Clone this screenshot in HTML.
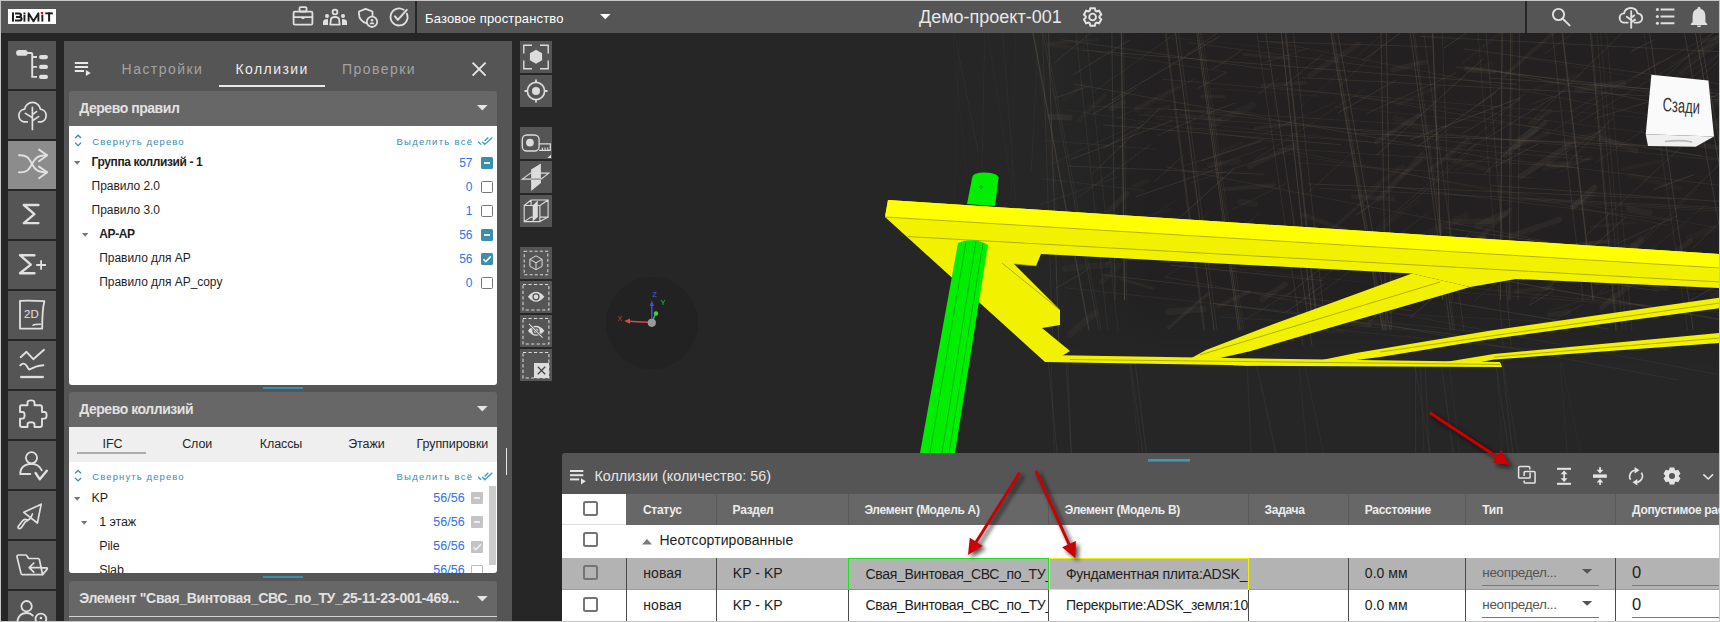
<!DOCTYPE html>
<html><head><meta charset="utf-8">
<style>
*{box-sizing:border-box;margin:0;padding:0}
html,body{width:1720px;height:622px;overflow:hidden}
body{position:relative;background:#c6c6c6;font-family:"Liberation Sans",sans-serif;color:#222}
.a{position:absolute}
.t{position:absolute;white-space:nowrap;line-height:1}
svg{position:absolute;overflow:visible}
.ic{fill:none;stroke:#e0e0e0;stroke-width:2;stroke-linecap:round;stroke-linejoin:round}
.sb{position:absolute;left:8px;width:48px;height:48px;background:#555}
</style></head><body>

<!-- main dark area -->
<div class="a" style="left:1px;top:33px;width:1718px;height:588px;background:#262626"></div>

<!-- TOP BAR -->
<div class="a" style="left:1px;top:1px;width:1718px;height:32px;background:#555"></div>
<div class="a" style="left:415px;top:1px;width:2px;height:32px;background:#262626"></div>
<div class="a" style="left:1525px;top:1px;width:2px;height:32px;background:#262626"></div>

<!-- logo -->
<div class="a" style="left:8px;top:9px;width:48px;height:15px;background:#fff"></div>
<svg style="left:8px;top:9px" width="48" height="15">
 <g fill="#1e1e1e">
  <rect x="4" y="3.4" width="2" height="9.2"/>
  <rect x="15.5" y="3.5" width="1.9" height="1.6"/>
  <rect x="15.5" y="5.6" width="1.9" height="7"/>
  <rect x="33.4" y="5.6" width="1.9" height="7"/>
  <rect x="37.3" y="3.4" width="7.6" height="1.9"/>
  <rect x="40.1" y="3.4" width="2" height="9.2"/>
 </g>
 <rect x="32.8" y="3" width="2.3" height="2" fill="#f00"/>
 <path d="M7,4.4 H11.2 Q13,4.4 13,6.1 Q13,7.9 11.2,7.9 H8 M11.2,7.9 Q13.6,7.9 13.6,9.8 Q13.6,11.6 11.4,11.6 H7" fill="none" stroke="#1e1e1e" stroke-width="2"/>
 <path d="M20.6,12.6 V4.2 L25.5,12.2 L30.4,4.2 V12.6" fill="none" stroke="#1e1e1e" stroke-width="1.9" stroke-linejoin="round"/>
</svg>

<!-- top icons -->
<svg style="left:0;top:0" width="1720" height="33">
 <g class="ic" style="stroke-width:1.8">
  <!-- briefcase -->
  <rect x="299.5" y="7.2" width="7" height="4.3" rx="1"/>
  <rect x="293.6" y="11.6" width="18.8" height="13" rx="1.2"/>
  <path d="M293.6,17.2 H312.4"/>
  <rect x="301.6" y="17" width="2.8" height="2" fill="#e0e0e0" stroke="none"/>
  <!-- people -->
  <circle cx="335" cy="12" r="2.4"/>
  <path d="M330.3,24.6 L331,19 Q331.6,17 335,17 Q338.4,17 339,19 L339.7,24.6 Z"/>
  <!-- shield -->
  <path d="M367,23.5 Q359,21 359,14 V11.5 L365.6,8.8 L372.5,11.5 V16"/>
  <circle cx="372" cy="21.8" r="5.2"/>
  <!-- check circle -->
  <path d="M403.6,9.8 A8.5,8.5 0 1 0 406.9,13.7"/>
  <path d="M395,16.4 L397.8,19.9 L406.8,9.9" style="stroke-width:2"/>
 </g>
 <g fill="#e0e0e0">
  <circle cx="327" cy="16" r="2"/>
  <circle cx="343" cy="16" r="2"/>
  <path d="M323,25 V22 Q323,19 328,19 V25 Z"/>
  <path d="M347,25 V22 Q347,19 342,19 V25 Z"/>
  <circle cx="372" cy="20.2" r="1.3"/>
  <path d="M369.6,24.3 Q369.6,22.3 372,22.3 Q374.4,22.3 374.4,24.3 Z"/>
 </g>
</svg>

<div class="t" style="left:425px;top:12px;font-size:13px;color:#fff;letter-spacing:0.15px">Базовое пространство</div>
<svg style="left:600px;top:14px" width="11" height="6"><path d="M0,0 H10.5 L5.25,5.2 Z" fill="#fff"/></svg>

<div class="t" style="left:919px;top:8px;font-size:18px;color:#e8e8e8">Демо-проект-001</div>

<!-- gear top -->
<svg style="left:0;top:0" width="1720" height="33">
 <path d="M1095.51,10.74 L1094.78,8.27 L1090.42,8.27 L1089.69,10.74 L1088.63,11.35 L1086.13,10.75 L1083.95,14.52 L1085.73,16.39 L1085.73,17.61 L1083.95,19.48 L1086.13,23.25 L1088.63,22.65 L1089.69,23.26 L1090.42,25.73 L1094.78,25.73 L1095.51,23.26 L1096.57,22.65 L1099.07,23.25 L1101.25,19.48 L1099.47,17.61 L1099.47,16.39 L1101.25,14.52 L1099.07,10.75 L1096.57,11.35 Z" fill="none" stroke="#e4e4e4" stroke-width="2" stroke-linejoin="miter"/>
 <circle cx="1092.6" cy="17" r="3.4" fill="none" stroke="#e4e4e4" stroke-width="1.9"/>
</svg>
<!-- top right icons -->
<svg style="left:0;top:0" width="1720" height="33">
 <g class="ic" style="stroke-width:1.9">
  <circle cx="1558.5" cy="14.5" r="5.6"/>
  <path d="M1562.5,18.5 L1569.6,25.4"/>
  <!-- cloud tree -->
  <path d="M1627.8,22.6 H1624.5 A4.6,4.6 0 0 1 1624,13.4 A7,7 0 0 1 1637.6,13.4 A4.6,4.6 0 0 1 1637.6,22.6 H1634.5"/>
  <path d="M1631.2,11.2 V27.8 M1631.2,20 L1626.8,16.8 M1631.2,17.8 L1634.2,15.4 M1631.2,22.2 L1635,19.6"/>
  <!-- list -->
  <path d="M1660.6,9.5 H1674.4 M1660.6,16.5 H1674.4 M1660.6,23.2 H1674.4" style="stroke-width:2;stroke-linecap:butt"/>
 </g>
 <g fill="#e0e0e0">
  <circle cx="1657.4" cy="9.5" r="1.5"/><circle cx="1657.4" cy="16.5" r="1.5"/><circle cx="1657.4" cy="23.2" r="1.5"/>
  <path d="M1699,6.8 Q1700.5,6.8 1700.6,8.8 Q1705.4,10.2 1705.4,16 V22 L1707.2,24 V25 H1690.8 V24 L1692.6,22 V16 Q1692.6,10.2 1697.4,8.8 Q1697.5,6.8 1699,6.8 Z"/>
  <path d="M1696.8,25.6 H1701.2 Q1701,27.3 1699,27.3 Q1697,27.3 1696.8,25.6 Z"/>
 </g>
</svg>

<!-- SIDEBAR -->
<div class="sb" style="top:41px"></div>
<div class="sb" style="top:91px"></div>
<div class="sb" style="top:141px;background:#8c8c8c"></div>
<div class="sb" style="top:191px"></div>
<div class="sb" style="top:241px"></div>
<div class="sb" style="top:291px"></div>
<div class="sb" style="top:341px"></div>
<div class="sb" style="top:391px"></div>
<div class="sb" style="top:441px"></div>
<div class="sb" style="top:491px"></div>
<div class="sb" style="top:541px"></div>
<div class="sb" style="top:591px;height:30px"></div>

<svg style="left:8px;top:41px" width="48" height="48">
 <g fill="#e0e0e0">
  <rect x="8.1" y="9.1" width="11.6" height="5.6" rx="2.8"/>
  <rect x="31" y="14" width="9" height="4.2" rx="2.1"/>
  <rect x="31" y="23.8" width="9" height="4.2" rx="2.1"/>
  <rect x="31" y="33.8" width="9" height="4.2" rx="2.1"/>
 </g>
 <path class="ic" style="stroke-width:1.9;stroke-linecap:butt;stroke-linejoin:miter" d="M18,12 H23.2 Q24.2,12 24.2,13 V35.9 H29 M24.2,16 H29 M24.2,25.9 H29"/>
</svg>
<svg style="left:8px;top:91px" width="48" height="48">
 <path class="ic" style="stroke-width:1.7" d="M19.3,30.8 H15.8 A6.4,6.4 0 0 1 16.6,18.2 A8.0,8.0 0 0 1 32.4,18.2 A6.4,6.4 0 0 1 33.2,30.8 H30.4"/>
 <path class="ic" style="stroke-width:1.7" d="M24.4,16.3 V38.4 M24.4,26.8 L17.4,22.4 M24.4,23.6 L28.5,20.6 M24.4,29.8 L30.6,25.6"/>
</svg>
<svg style="left:8px;top:141px" width="48" height="48">
 <g class="ic" style="stroke-width:1.9">
  <path d="M11,14.3 C19,13.8 21,17 24,23 C27,29 30,31.3 38.8,31.3"/>
  <path d="M11,31.3 C19,31.8 21,28.6 24,23 C27,17 30,14.3 38.8,14.3"/>
  <path d="M31,8.6 L39.2,14.3 L31,20.2 M31,25.6 L39.2,31.3 L31,37.2"/>
 </g>
</svg>
<svg style="left:8px;top:191px" width="48" height="48">
 <path class="ic" style="stroke-width:2.4" d="M30.4,14 H15.8 L26.4,23.1 L15.8,32.1 H30.4"/>
</svg>
<svg style="left:8px;top:241px" width="48" height="48">
 <path class="ic" style="stroke-width:2.4" d="M26.4,14.2 H12 L22.8,23.6 L12,32.3 H26.4"/>
 <path class="ic" style="stroke-width:1.8;stroke-linecap:butt" d="M28.2,24 H38 M33.1,19.2 V28.8"/>
</svg>
<svg style="left:8px;top:291px" width="48" height="48">
 <path class="ic" style="stroke-width:1.8" d="M12,9.8 Q24,9.4 36.4,10.2 Q34.2,18 34.2,37.6 H12 Z"/>
 <path class="ic" style="stroke-width:1.5" d="M25,34.3 Q25.6,33.3 32.5,33.3"/>
 <text x="16" y="26.8" font-family="Liberation Sans" font-size="11.5" fill="#e0e0e0">2D</text>
</svg>
<svg style="left:8px;top:341px" width="48" height="48">
 <g class="ic" style="stroke-width:1.9">
  <path d="M12.7,16.2 L18.5,10.8 L25.3,18.2 L36,8.8"/>
  <path d="M12.2,24.4 Q15.5,21 18,24 L21,28.6 L28,25.6 Q31.5,24.4 35.4,24.2"/>
  <path d="M12.2,36 H35.8" style="stroke-width:2.3;stroke-linecap:butt"/>
 </g>
</svg>
<svg style="left:8px;top:391px" width="48" height="48">
 <path class="ic" style="stroke-width:1.9" d="M13.5,14.2 H19.5 V11.5 Q19.5,9.4 23,9.4 Q26.5,9.4 26.5,11.5 V14.2 H32 Q34,14.2 34,16.2 V21 H36.5 Q38.6,21 38.6,24.3 Q38.6,27.6 36.5,27.6 H34 V33.8 Q34,36 32,36 H26.5 V33.3 Q26.5,31.2 23,31.2 Q19.5,31.2 19.5,33.3 V36 H14 Q12,36 12,33.8 V27.6 H14.6 Q16.6,27.6 16.6,24.3 Q16.6,21 14.6,21 H12 V16.2 Q12,14.2 13.5,14.2 Z"/>
</svg>
<svg style="left:8px;top:441px" width="48" height="48">
 <g class="ic" style="stroke-width:1.8">
  <circle cx="23.5" cy="16.8" r="5.6"/>
  <path d="M22.3,33 H12.2 Q12.4,23 23.5,22.8 Q30.8,23 33.8,29.3"/>
 </g>
 <path class="ic" style="stroke-width:2.4" d="M27.6,32 L31.8,38.3 L38.8,29.8"/>
</svg>
<svg style="left:8px;top:491px" width="48" height="48">
 <g class="ic" style="stroke-width:1.7">
  <path d="M33.2,13.2 L15.8,21.3 L29.4,32 Z"/>
  <path d="M24.4,23 L22.5,27.4 Q20,29.5 18,28.5 Q16,28 14,30.5 L10.2,35.6 Q9.6,37.6 11.6,37.6 Q12.6,37.6 13.6,36.2 L17.2,31 Q19.5,29.8 22.5,27.4"/>
 </g>
</svg>
<svg style="left:8px;top:541px" width="48" height="48">
 <g class="ic" style="stroke-width:1.7">
  <path d="M34.4,33.6 H14.4 Q13.4,33.6 13,32.4 L9,15.8 Q8.8,14 10.6,14 H17.5 Q18.4,14 19,15 L20.6,17.5 H30 Q31,17.5 31.4,18.6 L34.5,33.3"/>
  <path d="M33.6,26.8 H38.5 Q39.8,27 39,28.4 L34.6,33.6"/>
  <path d="M21.2,26.6 H33.6 M25.8,22 L21.2,26.6 L25.8,31.2"/>
 </g>
</svg>
<svg style="left:8px;top:591px" width="48" height="31">
 <g class="ic" style="stroke-width:1.8">
  <circle cx="18.6" cy="15.2" r="5.2"/>
  <path d="M9.4,30 Q11,22 18.6,22 Q22.5,22 24.8,24.6"/>
  <circle cx="32.9" cy="28" r="5.4"/>
 </g>
 <circle cx="32.9" cy="27" r="1.3" fill="#e0e0e0"/>
</svg>


<!-- PANEL -->
<div class="a" style="left:64px;top:41px;width:448px;height:580px;background:#555"></div>

<!--PANEL_START--><svg style="left:0;top:0" width="520" height="100"><g fill="#e8e8e8"><rect x="74.8" y="62" width="13.3" height="2"/><rect x="74.8" y="66" width="13.3" height="2"/><rect x="74.8" y="70" width="9.2" height="2"/><path d="M85.9,70 L90.7,73 L85.9,76.1 Z"/></g><path d="M472.6,62.6 L485.6,75.6 M485.6,62.6 L472.6,75.6" stroke="#e6e6e6" stroke-width="1.9" fill="none"/></svg>
<div class="t" style="left:121.6px;top:62.45px;font-size:14px;color:#a3a3a3;letter-spacing:1.45px;">Настройки</div>
<div class="t" style="left:235.4px;top:62.45px;font-size:14px;color:#ececec;letter-spacing:1.45px;">Коллизии</div>
<div class="t" style="left:342px;top:62.45px;font-size:14px;color:#a3a3a3;letter-spacing:1.45px;">Проверки</div>
<div class="a" style="left:219px;top:85px;width:106px;height:2px;background:#e8e8e8"></div>
<div class="a" style="left:69px;top:91px;width:428px;height:35px;background:#676767;border-radius:3px 3px 0 0"></div>
<div class="t" style="left:79.2px;top:101.35px;font-size:14px;color:#e2e2e2;font-weight:700;letter-spacing:-0.45px;">Дерево правил</div>
<svg style="left:476.6px;top:104.7px" width="11" height="6"><path d="M0,0 H10.6 L5.3,5.6 Z" fill="#e4e4e4"/></svg>
<div class="a" style="left:69px;top:126px;width:428px;height:259px;background:#fff;border-radius:0 0 3px 3px"></div>
<svg style="left:0;top:0" width="520" height="622"><path d="M75.2,138 L78.1,135.2 L81,138 M75.2,142.7 L78.1,145.6 L81,142.7" stroke="#3a8db0" stroke-width="1.3" fill="none"/><path d="M478.2,141.7 L481,144.6 M482.2,141.7 L484.8,144.4 L492.3,137.5 M484.6,141.1 L488.3,137.5" stroke="#3a9bc6" stroke-width="1.35" fill="none"/></svg>
<div class="t" style="left:92.3px;top:136.96px;font-size:9.5px;color:#3a8db0;letter-spacing:1.1px;">Свернуть дерево</div>
<div class="t" style="left:396.4px;top:136.96px;font-size:9.5px;color:#3a8db0;letter-spacing:1.3px;">Выделить всё</div>
<svg style="left:74px;top:161px" width="7" height="5"><path d="M0,0 H6.4 L3.2,3.8 Z" fill="#757575"/></svg>
<div class="t" style="left:91.6px;top:155.84px;font-size:12px;color:#1f1f1f;font-weight:700;letter-spacing:-0.4px;">Группа коллизий - 1</div>
<div class="t" style="right:1247.5px;top:156.84px;font-size:12px;color:#2f72f0">57</div>
<div class="a" style="left:481px;top:157px;width:12px;height:12px;background:#3a8fae;border-radius:1.5px"></div>
<div class="a" style="left:483.8px;top:162px;width:6.4px;height:2px;background:#e6e6e6"></div>
<div class="t" style="left:91.6px;top:179.84px;font-size:12px;color:#1f1f1f;letter-spacing:-0.05px;">Правило 2.0</div>
<div class="t" style="right:1247.5px;top:180.84px;font-size:12px;color:#2f72f0">0</div>
<div class="a" style="left:481px;top:181px;width:12px;height:12px;border:1.5px solid #777;border-radius:1.5px;background:#fff"></div>
<div class="t" style="left:91.6px;top:203.84px;font-size:12px;color:#1f1f1f;letter-spacing:-0.05px;">Правило 3.0</div>
<div class="t" style="right:1247.5px;top:204.84px;font-size:12px;color:#2f72f0">1</div>
<div class="a" style="left:481px;top:205px;width:12px;height:12px;border:1.5px solid #777;border-radius:1.5px;background:#fff"></div>
<svg style="left:81.8px;top:233px" width="7" height="5"><path d="M0,0 H6.4 L3.2,3.8 Z" fill="#757575"/></svg>
<div class="t" style="left:99.3px;top:227.84px;font-size:12px;color:#1f1f1f;font-weight:700;letter-spacing:-0.4px;">AP-AP</div>
<div class="t" style="right:1247.5px;top:228.84px;font-size:12px;color:#2f72f0">56</div>
<div class="a" style="left:481px;top:229px;width:12px;height:12px;background:#3a8fae;border-radius:1.5px"></div>
<div class="a" style="left:483.8px;top:234px;width:6.4px;height:2px;background:#e6e6e6"></div>
<div class="t" style="left:99.3px;top:251.84px;font-size:12px;color:#1f1f1f;letter-spacing:-0.05px;">Правило для AP</div>
<div class="t" style="right:1247.5px;top:252.84px;font-size:12px;color:#2f72f0">56</div>
<div class="a" style="left:481px;top:253px;width:12px;height:12px;background:#3a8fae;border-radius:1.5px"></div>
<svg style="left:481px;top:253px" width="12" height="12"><path d="M2.4,6.2 L4.8,8.6 L9.8,3.4" stroke="#fff" stroke-width="1.6" fill="none"/></svg>
<div class="t" style="left:99.3px;top:275.84px;font-size:12px;color:#1f1f1f;letter-spacing:-0.05px;">Правило для AP_copy</div>
<div class="t" style="right:1247.5px;top:276.84px;font-size:12px;color:#2f72f0">0</div>
<div class="a" style="left:481px;top:277px;width:12px;height:12px;border:1.5px solid #777;border-radius:1.5px;background:#fff"></div>
<div class="a" style="left:263px;top:387px;width:40px;height:2px;background:#3a8db0"></div>
<div class="a" style="left:69px;top:392px;width:428px;height:35px;background:#676767;border-radius:3px 3px 0 0"></div>
<div class="t" style="left:79.2px;top:402.15px;font-size:14px;color:#e2e2e2;font-weight:700;letter-spacing:-0.45px;">Дерево коллизий</div>
<svg style="left:476.6px;top:405.5px" width="11" height="6"><path d="M0,0 H10.6 L5.3,5.6 Z" fill="#e4e4e4"/></svg>
<div class="a" style="left:69px;top:427px;width:428px;height:35px;background:#efefef"></div>
<div class="t" style="left:102.6px;top:437.72px;font-size:12.5px;color:#262626;letter-spacing:-0.1px;">IFC</div>
<div class="t" style="left:182.2px;top:437.72px;font-size:12.5px;color:#262626;letter-spacing:-0.1px;">Слои</div>
<div class="t" style="left:259.8px;top:437.72px;font-size:12.5px;color:#262626;letter-spacing:-0.1px;">Классы</div>
<div class="t" style="left:348.2px;top:437.72px;font-size:12.5px;color:#262626;letter-spacing:-0.1px;">Этажи</div>
<div class="t" style="left:416.6px;top:437.72px;font-size:12.5px;color:#262626;letter-spacing:-0.1px;">Группировки</div>
<div class="a" style="left:77px;top:452px;width:69px;height:2px;background:#acacac"></div>
<div class="a" style="left:69px;top:462px;width:428px;height:111px;background:#fff;border-radius:0 0 3px 3px;overflow:hidden">
<div class="a" style="left:-69px;top:-462px;width:1720px;height:622px"><svg style="left:0;top:0" width="520" height="622"><path d="M75.2,473.3 L78.1,470.5 L81,473.3 M75.2,478.0 L78.1,480.90000000000003 L81,478.0" stroke="#3a8db0" stroke-width="1.3" fill="none"/><path d="M478.2,477.0 L481,479.90000000000003 M482.2,477.0 L484.8,479.7 L492.3,472.8 M484.6,476.40000000000003 L488.3,472.8" stroke="#3a9bc6" stroke-width="1.35" fill="none"/></svg>
<div class="t" style="left:92.3px;top:472.26px;font-size:9.5px;color:#3a8db0;letter-spacing:1.1px;">Свернуть дерево</div>
<div class="t" style="left:396.4px;top:472.26px;font-size:9.5px;color:#3a8db0;letter-spacing:1.3px;">Выделить всё</div>
<svg style="left:73.9px;top:497.2px" width="7" height="5"><path d="M0,0 H6.4 L3.2,3.8 Z" fill="#757575"/></svg>
<div class="t" style="left:91.4px;top:491.62px;font-size:12.5px;color:#1f1f1f;letter-spacing:-0.1px;">KP</div>
<div class="t" style="right:1255.4px;top:491.62px;font-size:12.5px;color:#2f72f0">56/56</div>
<div class="a" style="left:471px;top:492.2px;width:12px;height:12px;background:#c4c4c4;border-radius:1px"></div>
<div class="a" style="left:474px;top:497.2px;width:6px;height:2px;background:#ededed"></div>
<svg style="left:81px;top:521.4px" width="7" height="5"><path d="M0,0 H6.4 L3.2,3.8 Z" fill="#757575"/></svg>
<div class="t" style="left:99.2px;top:515.82px;font-size:12.5px;color:#1f1f1f;letter-spacing:-0.1px;">1 этаж</div>
<div class="t" style="right:1255.4px;top:515.82px;font-size:12.5px;color:#2f72f0">56/56</div>
<div class="a" style="left:471px;top:516.4px;width:12px;height:12px;background:#c4c4c4;border-radius:1px"></div>
<div class="a" style="left:474px;top:521.4px;width:6px;height:2px;background:#ededed"></div>
<div class="t" style="left:99.2px;top:540.22px;font-size:12.5px;color:#1f1f1f;letter-spacing:-0.1px;">Pile</div>
<div class="t" style="right:1255.4px;top:540.22px;font-size:12.5px;color:#2f72f0">56/56</div>
<div class="a" style="left:471px;top:540.8px;width:12px;height:12px;background:#c4c4c4;border-radius:1px"></div>
<svg style="left:471px;top:540.8px" width="12" height="12"><path d="M2.4,6.2 L4.8,8.6 L9.8,3.4" stroke="#f2f2f2" stroke-width="1.5" fill="none"/></svg>
<div class="t" style="left:99.2px;top:564.02px;font-size:12.5px;color:#1f1f1f;letter-spacing:-0.1px;">Slab</div>
<div class="t" style="right:1255.4px;top:564.02px;font-size:12.5px;color:#2f72f0">56/56</div>
<div class="a" style="left:471px;top:564.6px;width:12px;height:12px;border:1.3px solid #bbb;border-radius:1px;background:#fff"></div>
<div class="a" style="left:489px;top:486px;width:7px;height:79px;background:#cbcbcb"></div>
</div></div>
<div class="a" style="left:505.5px;top:448px;width:1.5px;height:27px;background:#e8e8e8"></div>
<div class="a" style="left:263px;top:576px;width:40px;height:2px;background:#3a8db0"></div>
<div class="a" style="left:69px;top:581px;width:428px;height:40px;background:#676767;border-radius:3px 3px 0 0"></div>
<div class="t" style="left:79.2px;top:590.95px;font-size:14px;color:#e2e2e2;font-weight:700;letter-spacing:-0.33px;">Элемент "Свая_Винтовая_СВС_по_ТУ_25-11-23-001-469...</div>
<svg style="left:476.6px;top:595.5px" width="11" height="6"><path d="M0,0 H10.6 L5.3,5.6 Z" fill="#e4e4e4"/></svg>
<div class="a" style="left:69px;top:616px;width:428px;height:1px;background:#d4d4d4"></div>
<!--PANEL_END-->

<!-- TOOL COLUMN -->


<!-- VIEWPORT -->
<!--VIEW_START--><div class="a" style="left:520px;top:41px;width:32px;height:32px;background:#555"></div>
<div class="a" style="left:520px;top:75px;width:32px;height:32px;background:#555"></div>
<div class="a" style="left:520px;top:127px;width:32px;height:32px;background:#555"></div>
<div class="a" style="left:520px;top:161px;width:32px;height:32px;background:#555"></div>
<div class="a" style="left:520px;top:195px;width:32px;height:32px;background:#555"></div>
<div class="a" style="left:520px;top:247px;width:32px;height:32px;background:#555"></div>
<div class="a" style="left:520px;top:281px;width:32px;height:32px;background:#555"></div>
<div class="a" style="left:520px;top:315px;width:32px;height:32px;background:#555"></div>
<div class="a" style="left:520px;top:349px;width:32px;height:32px;background:#555"></div>
<svg style="left:520px;top:41px" width="32" height="32">
 <path d="M3.8,12.4 V4.2 H12 M20,4.2 H28.2 V12.4 M28.2,19.6 V27.8 H20 M12,27.8 H3.8 V19.6" fill="none" stroke="#dcdcdc" stroke-width="1.4"/>
 <path d="M16,8.7 L22.1,12.2 V19.2 L16,22.7 L9.9,19.2 V12.2 Z" fill="#dcdcdc"/>
</svg>
<svg style="left:520px;top:75px" width="32" height="32">
 <circle cx="16" cy="16" r="8.6" fill="none" stroke="#dcdcdc" stroke-width="1.7"/>
 <circle cx="16" cy="16" r="4" fill="#dcdcdc"/>
 <path d="M16,4.5 V7.5 M16,24.5 V27.5 M4.5,16 H7.5 M24.5,16 H27.5" stroke="#dcdcdc" stroke-width="1.8"/>
</svg>
<svg style="left:520px;top:127px" width="32" height="32">
 <rect x="2.3" y="8" width="16.8" height="16" rx="4.5" fill="none" stroke="#dcdcdc" stroke-width="1.3"/>
 <circle cx="9.9" cy="15.6" r="3.9" fill="#dcdcdc"/>
 <path d="M19.1,16.9 H30.3 V23.4 H19.1" fill="none" stroke="#dcdcdc" stroke-width="1.2"/>
 <path d="M22.4,20.6 V23 M25.1,20.6 V23 M27.8,20.6 V23" stroke="#dcdcdc" stroke-width="1.1"/>
 <path d="M31,27.4 V31 H27.4 Z" fill="#dcdcdc"/>
</svg>
<svg style="left:520px;top:161px" width="32" height="32">
 <path d="M20.9,2.5 V22 L11.1,30 V8.4 Z" fill="#dcdcdc"/>
 <path d="M2.3,18.1 L10.6,12.1 H28.8 L21,18.1 Z" fill="none" stroke="#dcdcdc" stroke-width="1.1"/>
 <clipPath id="spc"><path d="M20.9,2.5 V22 L11.1,30 V8.4 Z"/></clipPath>
 <path d="M2.3,18.1 H21" fill="none" stroke="#8a8a8a" stroke-width="1.1" clip-path="url(#spc)"/>
</svg>
<svg style="left:520px;top:195px" width="32" height="32">
 <path d="M4.2,10.5 H19.9 V26.6 H4.2 Z M11.1,5 H28.1 V22.1 H19.9 M11.1,5 V10.5 M4.2,10.5 L11.1,5 M19.9,10.5 L28.1,5 M19.9,26.6 L28.1,22.1 M4.2,26.6 L11.1,22.1 H12.7" fill="none" stroke="#dcdcdc" stroke-width="1.1"/>
 <path d="M12.7,10.5 L17.8,5.5 V22 L12.7,26.6 Z" fill="#dcdcdc"/>
</svg>
<svg style="left:520px;top:247px" width="32" height="32">
 <rect x="4.2" y="4.2" width="23.6" height="23.6" fill="none" stroke="#dcdcdc" stroke-width="1.05" stroke-dasharray="3,2.2"/>
 <path d="M16,8.8 L22.1,12.3 V19.3 L16,22.7 L9.9,19.3 V12.3 Z M9.9,12.3 L16,15.8 L22.1,12.3 M16,15.8 V22.7" fill="none" stroke="#dcdcdc" stroke-width="1"/>
</svg>
<svg style="left:520px;top:281px" width="32" height="32">
 <rect x="3" y="3.4" width="25.9" height="25.6" fill="none" stroke="#dcdcdc" stroke-width="1.05" stroke-dasharray="3.2,2.3"/>
 <path d="M7.9,15.8 Q16,5.8 24.4,15.8 Q16,25.8 7.9,15.8 Z" fill="#dcdcdc"/>
 <circle cx="16" cy="15.8" r="3" fill="none" stroke="#555" stroke-width="1.3"/>
</svg>
<svg style="left:520px;top:315px" width="32" height="32">
 <rect x="3" y="3.4" width="25.9" height="25.6" fill="none" stroke="#dcdcdc" stroke-width="1.05" stroke-dasharray="3.2,2.3"/>
 <path d="M7.9,15.8 Q16,5.8 24.4,15.8 Q16,25.8 7.9,15.8 Z" fill="#dcdcdc"/>
 <circle cx="16" cy="15.8" r="3" fill="none" stroke="#555" stroke-width="1.3"/>
 <path d="M9,8.8 L22.6,22.6" stroke="#555" stroke-width="2.6"/>
 <path d="M9,8.8 L22.6,22.6" stroke="#dcdcdc" stroke-width="1.1"/>
</svg>
<svg style="left:520px;top:349px" width="32" height="32">
 <rect x="3" y="3.4" width="25.9" height="25.6" fill="none" stroke="#dcdcdc" stroke-width="1.05" stroke-dasharray="3.2,2.3"/>
 <rect x="14" y="14" width="15" height="15" fill="#dcdcdc"/>
 <path d="M17.8,17.8 L25.2,25.2 M25.2,17.8 L17.8,25.2" stroke="#444" stroke-width="1.3"/>
</svg>
<svg style="left:512px;top:33px;overflow:hidden" width="1207" height="588" viewBox="512 33 1207 588"><defs><linearGradient id="wg" x1="0" y1="0" x2="1" y2="0"><stop offset="0" stop-color="#fff" stop-opacity="0"/><stop offset="0.15" stop-color="#fff"/><stop offset="1" stop-color="#fff"/></linearGradient><linearGradient id="wv" x1="0" y1="0" x2="0" y2="1"><stop offset="0" stop-color="#fff"/><stop offset="0.75" stop-color="#fff"/><stop offset="1" stop-color="#fff" stop-opacity="0"/></linearGradient><mask id="wm" maskUnits="userSpaceOnUse" x="1060" y="33" width="660" height="330"><rect x="1060" y="33" width="660" height="330" fill="url(#wg)"/></mask><mask id="wm2" maskUnits="userSpaceOnUse" x="1060" y="33" width="660" height="330"><rect x="1060" y="33" width="660" height="330" fill="url(#wv)"/></mask></defs><g mask="url(#wm2)"><rect x="1060" y="33" width="660" height="330" fill="#222020" mask="url(#wm)"/></g><g stroke="#716759" stroke-width="1" fill="none" stroke-linecap="round"><path d="M1045.0,33.0 L1101.0,330.0" stroke-opacity="0.15"/><path d="M1042.7,33.0 L1098.7,330.0" stroke-opacity="0.21"/><path d="M1033.2,33.0 L1089.2,330.0" stroke-opacity="0.24"/><path d="M1032.7,33.0 L1088.7,330.0" stroke-opacity="0.23"/><path d="M1048.5,33.0 L1058.8,345.0" stroke-opacity="0.31"/><path d="M1042.5,33.0 L1052.8,345.0" stroke-opacity="0.18"/><path d="M1076.0,33.0 L1107.8,330.0" stroke-opacity="0.18"/><path d="M1086.1,33.0 L1117.9,330.0" stroke-opacity="0.17"/><path d="M1121.4,33.0 L1124.6,300.0" stroke-opacity="0.25"/><path d="M1123.6,33.0 L1126.8,300.0" stroke-opacity="0.16"/><path d="M1121.4,33.0 L1124.6,300.0" stroke-opacity="0.18"/><path d="M1111.9,33.0 L1115.1,300.0" stroke-opacity="0.28"/><path d="M1121.3,33.0 L1124.4,300.0" stroke-opacity="0.26"/><path d="M1175.5,33.0 L1214.1,330.0" stroke-opacity="0.23"/><path d="M1178.5,33.0 L1217.0,330.0" stroke-opacity="0.21"/><path d="M1165.0,33.0 L1203.5,330.0" stroke-opacity="0.18"/><path d="M1175.6,33.0 L1214.1,330.0" stroke-opacity="0.16"/><path d="M1166.0,33.0 L1204.5,330.0" stroke-opacity="0.24"/><path d="M1202.2,33.0 L1243.9,330.0" stroke-opacity="0.15"/><path d="M1200.2,33.0 L1242.0,330.0" stroke-opacity="0.17"/><path d="M1196.8,33.0 L1238.6,330.0" stroke-opacity="0.33"/><path d="M1198.4,33.0 L1240.2,330.0" stroke-opacity="0.33"/><path d="M1265.8,33.0 L1312.0,345.0" stroke-opacity="0.30"/><path d="M1256.8,33.0 L1303.0,345.0" stroke-opacity="0.21"/><path d="M1281.4,33.0 L1313.3,330.0" stroke-opacity="0.16"/><path d="M1285.4,33.0 L1317.3,330.0" stroke-opacity="0.28"/><path d="M1281.3,33.0 L1313.3,330.0" stroke-opacity="0.29"/><path d="M1286.2,33.0 L1318.1,330.0" stroke-opacity="0.26"/><path d="M1293.6,33.0 L1325.6,330.0" stroke-opacity="0.23"/><path d="M1330.5,33.0 L1382.5,330.0" stroke-opacity="0.23"/><path d="M1333.4,33.0 L1385.4,330.0" stroke-opacity="0.16"/><path d="M1331.2,33.0 L1383.2,330.0" stroke-opacity="0.29"/><path d="M1332.6,33.0 L1384.6,330.0" stroke-opacity="0.19"/><path d="M1337.8,33.0 L1389.8,330.0" stroke-opacity="0.31"/><path d="M1381.0,33.0 L1385.9,330.0" stroke-opacity="0.32"/><path d="M1386.4,33.0 L1391.3,330.0" stroke-opacity="0.31"/><path d="M1423.7,33.0 L1463.9,330.0" stroke-opacity="0.22"/><path d="M1414.6,33.0 L1454.8,330.0" stroke-opacity="0.16"/><path d="M1413.0,33.0 L1453.2,330.0" stroke-opacity="0.27"/><path d="M1410.2,33.0 L1450.5,330.0" stroke-opacity="0.31"/><path d="M1432.9,33.0 L1443.0,300.0" stroke-opacity="0.25"/><path d="M1442.2,33.0 L1452.3,300.0" stroke-opacity="0.20"/><path d="M1432.5,33.0 L1442.6,300.0" stroke-opacity="0.31"/><path d="M1486.0,33.0 L1511.1,345.0" stroke-opacity="0.22"/><path d="M1478.0,33.0 L1503.1,345.0" stroke-opacity="0.16"/><path d="M1519.7,33.0 L1518.0,300.0" stroke-opacity="0.23"/><path d="M1502.2,33.0 L1500.5,300.0" stroke-opacity="0.26"/><path d="M1502.0,33.0 L1500.4,300.0" stroke-opacity="0.25"/><path d="M1510.7,33.0 L1509.0,300.0" stroke-opacity="0.33"/><path d="M1512.3,33.0 L1510.6,300.0" stroke-opacity="0.15"/><path d="M1562.7,33.0 L1593.4,300.0" stroke-opacity="0.33"/><path d="M1562.0,33.0 L1592.8,300.0" stroke-opacity="0.23"/><path d="M1552.3,33.0 L1583.0,300.0" stroke-opacity="0.24"/><path d="M1591.7,33.0 L1617.2,330.0" stroke-opacity="0.16"/><path d="M1596.9,33.0 L1622.3,330.0" stroke-opacity="0.19"/><path d="M1606.6,33.0 L1632.0,330.0" stroke-opacity="0.17"/><path d="M1590.5,33.0 L1615.9,330.0" stroke-opacity="0.33"/><path d="M1600.6,33.0 L1626.0,330.0" stroke-opacity="0.17"/><path d="M1649.6,33.0 L1693.2,330.0" stroke-opacity="0.31"/><path d="M1643.9,33.0 L1687.5,330.0" stroke-opacity="0.19"/><path d="M1695.4,33.0 L1748.8,330.0" stroke-opacity="0.25"/><path d="M1695.6,33.0 L1749.0,330.0" stroke-opacity="0.21"/><path d="M1684.5,33.0 L1737.9,330.0" stroke-opacity="0.30"/><path d="M1699.7,33.0 L1753.1,330.0" stroke-opacity="0.31"/><path d="M1455.5,273.0 L1719.0,291.0" stroke-opacity="0.18"/><path d="M1045.1,140.5 L1156.2,149.2" stroke-opacity="0.14"/><path d="M1527.4,239.6 L1719.0,275.9" stroke-opacity="0.26"/><path d="M1219.6,316.8 L1407.8,329.7" stroke-opacity="0.13"/><path d="M1354.5,96.1 L1719.0,159.1" stroke-opacity="0.18"/><path d="M1445.8,228.0 L1579.7,247.0" stroke-opacity="0.25"/><path d="M1420.1,266.0 L1711.3,283.6" stroke-opacity="0.23"/><path d="M1446.4,133.8 L1719.0,160.3" stroke-opacity="0.16"/><path d="M1406.9,314.4 L1574.9,323.0" stroke-opacity="0.12"/><path d="M1449.4,302.0 L1607.9,329.0" stroke-opacity="0.26"/><path d="M1212.2,229.2 L1531.7,245.9" stroke-opacity="0.10"/><path d="M1367.8,321.4 L1678.5,380.1" stroke-opacity="0.17"/><path d="M1459.6,292.3 L1644.0,305.7" stroke-opacity="0.15"/><path d="M1334.9,106.7 L1538.7,127.3" stroke-opacity="0.12"/><path d="M1214.0,303.5 L1497.2,340.1" stroke-opacity="0.24"/><path d="M1507.2,159.7 L1719.0,185.2" stroke-opacity="0.18"/><path d="M1258.9,41.5 L1432.1,46.8" stroke-opacity="0.23"/><path d="M1276.2,86.7 L1666.3,135.3" stroke-opacity="0.15"/><path d="M1318.8,188.4 L1719.0,207.6" stroke-opacity="0.19"/><path d="M1174.0,109.1 L1582.9,156.6" stroke-opacity="0.19"/><path d="M1504.5,259.4 L1719.0,288.2" stroke-opacity="0.18"/><path d="M1390.2,186.6 L1671.2,220.5" stroke-opacity="0.18"/><path d="M1393.6,312.8 L1719.0,374.7" stroke-opacity="0.14"/><path d="M1520.5,200.5 L1719.0,211.1" stroke-opacity="0.12"/><path d="M1067.7,166.0 L1264.0,174.3" stroke-opacity="0.21"/><path d="M1496.5,266.5 L1658.2,291.0" stroke-opacity="0.21"/><path d="M1489.1,78.0 L1719.0,93.5" stroke-opacity="0.25"/><path d="M1283.4,153.1 L1719.0,227.8" stroke-opacity="0.13"/><path d="M1298.1,162.9 L1533.8,177.8" stroke-opacity="0.15"/><path d="M1040.1,248.3 L1361.8,282.0" stroke-opacity="0.10"/><path d="M1354.4,133.5 L1659.3,145.9" stroke-opacity="0.26"/><path d="M1535.3,267.8 L1677.2,278.4" stroke-opacity="0.11"/><path d="M1170.6,265.0 L1322.5,280.5" stroke-opacity="0.25"/><path d="M1164.5,276.8 L1324.2,306.5" stroke-opacity="0.19"/><path d="M1076.5,241.9 L1199.5,260.0" stroke-opacity="0.17"/><path d="M1517.9,57.3 L1719.0,90.7" stroke-opacity="0.11"/><path d="M1064.6,287.7 L1509.8,335.4" stroke-opacity="0.15"/><path d="M1511.9,198.6 L1719.0,209.4" stroke-opacity="0.18"/><path d="M1086.9,106.1 L1251.5,112.4" stroke-opacity="0.13"/><path d="M1188.6,127.7 L1592.4,159.7" stroke-opacity="0.18"/><path d="M1210.4,88.3 L1317.7,96.1" stroke-opacity="0.10"/><path d="M1316.5,251.5 L1492.3,271.0" stroke-opacity="0.25"/><path d="M1455.8,67.2 L1719.0,97.3" stroke-opacity="0.23"/><path d="M1293.5,151.6 L1668.6,225.5" stroke-opacity="0.15"/><path d="M1397.5,280.7 L1719.0,312.5" stroke-opacity="0.16"/><path d="M1097.5,52.0 L1225.8,72.0" stroke-opacity="0.14"/><path d="M1073.9,84.0 L1510.4,161.7" stroke-opacity="0.21"/><path d="M1156.0,118.9 L1373.2,142.4" stroke-opacity="0.13"/><path d="M1166.9,167.1 L1651.6,261.8" stroke-opacity="0.19"/><path d="M1532.1,107.9 L1719.0,124.8" stroke-opacity="0.10"/><path d="M1276.8,148.2 L1577.9,167.5" stroke-opacity="0.18"/><path d="M1167.4,37.5 L1303.3,50.8" stroke-opacity="0.11"/><path d="M1188.2,42.6 L1381.3,67.6" stroke-opacity="0.18"/><path d="M1371.9,256.7 L1719.0,318.9" stroke-opacity="0.16"/><path d="M1542.1,131.9 L1701.8,156.3" stroke-opacity="0.20"/><path d="M1464.4,48.9 L1719.0,83.7" stroke-opacity="0.22"/><path d="M1102.4,274.8 L1411.9,310.6" stroke-opacity="0.23"/><path d="M1459.7,272.6 L1719.0,319.7" stroke-opacity="0.21"/><path d="M1149.6,239.8 L1262.0,245.8" stroke-opacity="0.16"/><path d="M1464.6,66.8 L1719.0,101.6" stroke-opacity="0.20"/><path d="M1284.4,236.1 L1385.8,252.9" stroke-opacity="0.22"/><path d="M1308.3,183.9 L1672.0,198.9" stroke-opacity="0.22"/><path d="M1068.7,110.1 L1274.9,141.9" stroke-opacity="0.13"/><path d="M1537.4,253.5 L1719.0,270.8" stroke-opacity="0.18"/><path d="M1428.8,237.0 L1719.0,277.4" stroke-opacity="0.11"/><path d="M1162.0,79.3 L1559.3,111.8" stroke-opacity="0.19"/><path d="M1061.5,39.7 L1269.1,69.6" stroke-opacity="0.21"/><path d="M1181.2,234.7 L1487.9,268.1" stroke-opacity="0.17"/><path d="M1494.7,70.8 L1674.4,106.1" stroke-opacity="0.25"/><path d="M1268.7,41.1 L1696.6,124.4" stroke-opacity="0.17"/><path d="M1139.1,115.0 L1617.4,146.5" stroke-opacity="0.19"/><path d="M1302.5,77.7 L1719.0,99.6" stroke-opacity="0.23"/><path d="M1491.2,185.6 L1719.0,201.4" stroke-opacity="0.24"/><path d="M1042.9,178.9 L1144.4,190.4" stroke-opacity="0.17"/><path d="M1103.2,124.8 L1340.8,144.7" stroke-opacity="0.23"/><path d="M1420.4,36.5 L1719.0,51.6" stroke-opacity="0.25"/><path d="M1498.8,245.6 L1714.7,265.8" stroke-opacity="0.16"/><path d="M1336.4,329.6 L1580.7,354.7" stroke-opacity="0.14"/><path d="M1082.9,50.2 L1516.8,84.3" stroke-opacity="0.25"/><path d="M1168.2,109.3 L1472.6,128.3" stroke-opacity="0.16"/><path d="M1688.8,301.4 L1781.9,249.5" stroke-opacity="0.28"/><path d="M1678.1,204.3 L1762.9,122.5" stroke-opacity="0.25"/><path d="M1340.6,263.3 L1418.6,200.9" stroke-opacity="0.13"/><path d="M1668.5,81.9 L1731.0,34.5" stroke-opacity="0.17"/><path d="M1539.2,328.1 L1582.6,304.6" stroke-opacity="0.17"/><path d="M1414.0,159.4 L1449.1,128.3" stroke-opacity="0.16"/><path d="M1654.2,189.2 L1694.0,174.6" stroke-opacity="0.30"/><path d="M1340.0,85.5 L1377.3,50.5" stroke-opacity="0.18"/><path d="M1092.8,114.3 L1136.0,88.3" stroke-opacity="0.28"/><path d="M1546.5,164.7 L1603.8,128.5" stroke-opacity="0.19"/><path d="M1263.0,63.0 L1308.0,48.5" stroke-opacity="0.14"/><path d="M1376.8,227.6 L1474.5,144.7" stroke-opacity="0.17"/><path d="M1201.2,160.9 L1261.3,141.0" stroke-opacity="0.27"/><path d="M1631.4,51.3 L1654.3,39.8" stroke-opacity="0.28"/><path d="M1356.1,215.3 L1376.1,200.8" stroke-opacity="0.29"/><path d="M1598.8,293.1 L1706.3,204.3" stroke-opacity="0.14"/><path d="M1136.4,196.5 L1217.8,168.7" stroke-opacity="0.25"/><path d="M1476.0,266.8 L1537.2,229.2" stroke-opacity="0.13"/><path d="M1569.0,112.4 L1671.8,56.1" stroke-opacity="0.17"/><path d="M1118.2,118.0 L1195.4,78.5" stroke-opacity="0.14"/><path d="M1078.5,197.1 L1150.9,144.3" stroke-opacity="0.16"/><path d="M1444.1,48.0 L1491.3,16.1" stroke-opacity="0.29"/><path d="M1474.1,301.3 L1536.9,248.8" stroke-opacity="0.16"/><path d="M1691.9,249.3 L1739.5,202.4" stroke-opacity="0.21"/><path d="M1494.7,166.8 L1537.9,143.8" stroke-opacity="0.29"/><path d="M1186.3,54.9 L1236.7,19.3" stroke-opacity="0.24"/><path d="M1166.5,276.1 L1253.0,220.2" stroke-opacity="0.16"/><path d="M1698.2,135.4 L1792.0,56.8" stroke-opacity="0.16"/><path d="M1554.0,130.5 L1659.6,61.5" stroke-opacity="0.15"/><path d="M1183.9,165.9 L1263.7,139.1" stroke-opacity="0.15"/><path d="M1301.1,106.8 L1408.8,9.8" stroke-opacity="0.13"/><path d="M1071.4,159.1 L1172.3,120.6" stroke-opacity="0.25"/><path d="M1717.3,315.2 L1766.9,272.0" stroke-opacity="0.29"/><path d="M1544.2,54.2 L1624.0,-4.4" stroke-opacity="0.19"/><path d="M1258.5,94.1 L1278.8,77.8" stroke-opacity="0.18"/><path d="M1688.3,80.9 L1795.1,-10.4" stroke-opacity="0.18"/><path d="M1596.1,283.4 L1655.0,226.5" stroke-opacity="0.21"/><path d="M1286.8,311.7 L1324.2,283.8" stroke-opacity="0.28"/><path d="M1050.9,164.1 L1143.9,121.0" stroke-opacity="0.13"/><path d="M1054.0,63.1 L1156.8,-21.2" stroke-opacity="0.25"/><path d="M1649.1,143.3 L1693.6,128.7" stroke-opacity="0.23"/><path d="M1210.6,252.8 L1259.1,213.7" stroke-opacity="0.12"/><path d="M1550.6,310.8 L1627.7,284.6" stroke-opacity="0.12"/><path d="M1191.1,182.8 L1297.2,147.5" stroke-opacity="0.19"/><path d="M1203.0,169.7 L1267.4,147.1" stroke-opacity="0.15"/><path d="M1583.0,259.2 L1677.0,216.0" stroke-opacity="0.23"/><path d="M1255.9,137.7 L1308.4,113.9" stroke-opacity="0.13"/><path d="M1165.9,263.3 L1208.2,223.0" stroke-opacity="0.13"/><path d="M1410.7,139.5 L1519.0,98.2" stroke-opacity="0.30"/><path d="M1212.5,69.4 L1241.2,50.7" stroke-opacity="0.25"/><path d="M1338.0,112.9 L1395.5,80.4" stroke-opacity="0.24"/><path d="M1545.4,290.6 L1625.2,217.6" stroke-opacity="0.27"/><path d="M1232.4,209.4 L1286.0,183.5" stroke-opacity="0.16"/><path d="M1200.5,116.1 L1234.3,103.3" stroke-opacity="0.22"/><path d="M1254.8,159.9 L1364.2,89.4" stroke-opacity="0.16"/><path d="M1587.0,234.5 L1696.2,133.1" stroke-opacity="0.21"/><path d="M1594.4,288.8 L1696.7,189.4" stroke-opacity="0.17"/><path d="M1112.1,100.0 L1219.7,36.3" stroke-opacity="0.29"/><path d="M1286.5,296.2 L1346.9,246.8" stroke-opacity="0.26"/><path d="M1681.6,75.7 L1755.2,34.0" stroke-opacity="0.16"/><path d="M1284.0,86.0 L1322.4,54.5" stroke-opacity="0.23"/><path d="M1479.0,104.0 L1500.0,87.8" stroke-opacity="0.24"/><path d="M1157.6,135.5 L1195.9,118.6" stroke-opacity="0.22"/><path d="M1073.6,74.4 L1129.2,40.2" stroke-opacity="0.24"/><path d="M1092.8,92.5 L1175.4,33.6" stroke-opacity="0.17"/><path d="M1241.9,321.4 L1290.0,292.4" stroke-opacity="0.18"/><path d="M1316.9,295.6 L1426.6,213.9" stroke-opacity="0.16"/><path d="M1531.6,104.1 L1552.1,96.5" stroke-opacity="0.20"/><path d="M1595.2,162.8 L1694.7,95.4" stroke-opacity="0.15"/><path d="M1040.2,204.9 L1117.9,176.7" stroke-opacity="0.14"/><path d="M1458.7,152.5 L1524.1,93.8" stroke-opacity="0.17"/><path d="M1389.1,313.4 L1418.9,293.8" stroke-opacity="0.26"/><path d="M1696.2,102.2 L1727.6,91.6" stroke-opacity="0.30"/><path d="M1362.6,60.5 L1466.0,-14.8" stroke-opacity="0.28"/><path d="M1457.4,284.1 L1491.8,268.6" stroke-opacity="0.16"/><path d="M1308.7,290.4 L1403.3,207.9" stroke-opacity="0.16"/><path d="M1305.4,195.2 L1359.9,145.4" stroke-opacity="0.16"/><path d="M1529.4,305.2 L1553.1,290.8" stroke-opacity="0.26"/><path d="M1056.3,288.1 L1086.9,270.3" stroke-opacity="0.22"/><path d="M1462.0,133.8 L1519.8,99.6" stroke-opacity="0.20"/><path d="M1483.9,174.6 L1543.4,116.1" stroke-opacity="0.23"/><path d="M1367.3,113.2 L1456.0,72.9" stroke-opacity="0.20"/><path d="M1153.7,182.2 L1183.4,155.3" stroke-opacity="0.20"/><path d="M1093.2,173.2 L1159.1,109.1" stroke-opacity="0.23"/><path d="M1086.7,257.7 L1176.7,199.9" stroke-opacity="0.13"/><path d="M1377.2,154.6 L1482.8,59.1" stroke-opacity="0.27"/><path d="M1716.3,257.3 L1809.7,176.6" stroke-opacity="0.30"/><path d="M1368.9,322.4 L1471.3,231.8" stroke-opacity="0.26"/><path d="M1671.2,64.0 L1722.8,39.7" stroke-opacity="0.15"/><path d="M1647.7,124.7 L1741.1,40.7" stroke-opacity="0.21"/><path d="M1663.8,105.4 L1707.5,77.2" stroke-opacity="0.18"/><path d="M1055.4,97.8 L1089.9,85.9" stroke-opacity="0.24"/><path d="M1646.9,93.9 L1737.6,10.6" stroke-opacity="0.22"/><path d="M1468.4,149.3 L1567.0,89.1" stroke-opacity="0.22"/><path d="M1638.1,75.3 L1747.4,14.2" stroke-opacity="0.19"/><path d="M1579.6,121.8 L1688.7,56.7" stroke-opacity="0.18"/><path d="M1556.8,173.3 L1592.7,156.0" stroke-opacity="0.13"/><path d="M1594.9,118.6 L1672.4,94.4" stroke-opacity="0.23"/><path d="M1487.3,135.7 L1507.4,116.0" stroke-opacity="0.15"/><path d="M1454.5,170.3 L1520.6,145.7" stroke-opacity="0.14"/><path d="M1186.6,234.4 L1208.6,212.4" stroke-opacity="0.18"/><path d="M1103.3,148.6 L1143.5,124.8" stroke-opacity="0.23"/><path d="M1170.7,225.9 L1233.4,169.1" stroke-opacity="0.29"/><path d="M1197.8,88.3 L1226.5,72.5" stroke-opacity="0.28"/><path d="M1568.9,161.6 L1612.7,118.1" stroke-opacity="0.24"/><path d="M1417.4,146.6 L1495.6,92.8" stroke-opacity="0.29"/><path d="M1535.4,117.1 L1636.7,18.9" stroke-opacity="0.22"/><path d="M1309.7,113.9 L1335.0,102.4" stroke-opacity="0.12"/><path d="M1409.6,317.9 L1442.4,289.6" stroke-opacity="0.23"/><path d="M1379.3,231.1 L1472.5,149.2" stroke-opacity="0.18"/><path d="M1243.9,54.3 L1289.5,58.7" stroke-opacity="0.12" stroke-width="3.02539760992404"/><path d="M1613.4,259.8 L1642.0,260.9" stroke-opacity="0.10" stroke-width="3.903793662685468"/><path d="M1111.5,108.5 L1123.0,102.4" stroke-opacity="0.12" stroke-width="5.780436901535112"/><path d="M1614.0,249.9 L1634.6,245.3" stroke-opacity="0.09" stroke-width="6.153800067820406"/><path d="M1395.3,118.3 L1431.0,130.8" stroke-opacity="0.08" stroke-width="6.52018080673899"/><path d="M1050.3,116.8 L1069.8,117.6" stroke-opacity="0.14" stroke-width="5.984605399219943"/><path d="M1261.9,299.6 L1285.1,284.3" stroke-opacity="0.13" stroke-width="5.522784171154436"/><path d="M1510.4,236.2 L1559.6,219.4" stroke-opacity="0.13" stroke-width="5.790472835492542"/><path d="M1622.3,169.0 L1661.2,161.1" stroke-opacity="0.08" stroke-width="3.847864430891366"/><path d="M1462.8,63.0 L1509.2,25.9" stroke-opacity="0.06" stroke-width="3.4267135149827346"/><path d="M1670.8,141.7 L1686.4,126.7" stroke-opacity="0.06" stroke-width="5.770500857935689"/><path d="M1470.4,245.6 L1509.9,209.8" stroke-opacity="0.11" stroke-width="4.453624463060861"/><path d="M1595.1,281.8 L1640.8,240.3" stroke-opacity="0.13" stroke-width="6.657635113932086"/><path d="M1681.2,71.6 L1699.4,56.2" stroke-opacity="0.06" stroke-width="6.390868988964298"/><path d="M1591.4,227.1 L1634.4,222.1" stroke-opacity="0.08" stroke-width="3.399508361001424"/><path d="M1106.4,263.4 L1124.6,253.4" stroke-opacity="0.09" stroke-width="3.083673845258379"/><path d="M1214.3,123.4 L1252.9,104.6" stroke-opacity="0.09" stroke-width="6.855996686280022"/><path d="M1382.0,291.2 L1416.8,257.9" stroke-opacity="0.09" stroke-width="4.745798335034321"/><path d="M1564.9,142.3 L1603.1,132.9" stroke-opacity="0.08" stroke-width="6.44895728909462"/><path d="M1101.7,281.8 L1118.5,265.1" stroke-opacity="0.08" stroke-width="6.048724077657415"/><path d="M1704.0,41.3 L1733.6,32.0" stroke-opacity="0.12" stroke-width="3.7380768050895985"/><path d="M1375.8,142.4 L1419.1,114.9" stroke-opacity="0.14" stroke-width="4.13491901204708"/><path d="M1185.8,246.3 L1215.7,221.0" stroke-opacity="0.11" stroke-width="3.3235303905693203"/><path d="M1575.0,245.7 L1616.5,240.6" stroke-opacity="0.09" stroke-width="4.605082271352547"/><path d="M1307.9,302.7 L1321.4,305.9" stroke-opacity="0.06" stroke-width="3.8244671315890857"/><path d="M1218.7,305.9 L1248.8,291.8" stroke-opacity="0.13" stroke-width="3.9343022985434555"/><path d="M1353.0,196.8 L1393.1,199.0" stroke-opacity="0.11" stroke-width="4.3939417773956375"/><path d="M1261.8,85.8 L1305.5,82.6" stroke-opacity="0.12" stroke-width="3.678202136253033"/><path d="M1337.9,268.2 L1371.1,240.8" stroke-opacity="0.10" stroke-width="6.540502092139835"/><path d="M1201.6,96.5 L1223.6,96.2" stroke-opacity="0.13" stroke-width="3.6183773494761016"/><path d="M1145.9,113.0 L1169.0,106.8" stroke-opacity="0.07" stroke-width="4.312300293320215"/><path d="M1168.5,327.7 L1207.7,294.1" stroke-opacity="0.14" stroke-width="3.4065519629547607"/><path d="M1300.9,330.2 L1342.7,331.3" stroke-opacity="0.09" stroke-width="3.7847637268686016"/><path d="M1473.2,71.5 L1491.4,63.2" stroke-opacity="0.06" stroke-width="4.59608450097822"/><path d="M1577.1,244.6 L1607.1,241.1" stroke-opacity="0.10" stroke-width="3.5672501104239687"/><path d="M1449.9,159.4 L1489.6,170.1" stroke-opacity="0.09" stroke-width="5.29591213427266"/><path d="M1548.6,164.2 L1567.8,164.5" stroke-opacity="0.13" stroke-width="6.096193422129522"/><path d="M1515.4,291.5 L1552.5,287.7" stroke-opacity="0.10" stroke-width="4.252057113045694"/><path d="M1466.6,68.9 L1493.4,71.4" stroke-opacity="0.12" stroke-width="5.518458818091702"/><path d="M1209.8,165.0 L1238.0,161.3" stroke-opacity="0.09" stroke-width="5.700980027350878"/><path d="M1671.6,94.0 L1707.8,97.2" stroke-opacity="0.09" stroke-width="4.959360656386374"/><path d="M1701.8,51.3 L1733.5,26.7" stroke-opacity="0.12" stroke-width="6.76235086321269"/><path d="M1392.6,69.8 L1425.5,61.8" stroke-opacity="0.12" stroke-width="5.048764646533323"/><path d="M1474.1,284.6 L1504.9,271.4" stroke-opacity="0.14" stroke-width="3.840357660957514"/><path d="M1504.7,155.8 L1545.2,122.2" stroke-opacity="0.14" stroke-width="4.421892006324792"/><path d="M1078.4,120.9 L1104.4,95.4" stroke-opacity="0.09" stroke-width="4.682188261406564"/><path d="M1514.1,143.9 L1534.7,129.7" stroke-opacity="0.12" stroke-width="6.75972547988861"/><path d="M1397.9,104.6 L1439.9,85.6" stroke-opacity="0.08" stroke-width="3.517196742576924"/><path d="M1567.3,278.8 L1602.7,266.7" stroke-opacity="0.10" stroke-width="3.9039472286295687"/><path d="M1694.5,144.2 L1730.0,149.4" stroke-opacity="0.13" stroke-width="4.872403532151542"/><path d="M1239.9,201.7 L1254.9,204.2" stroke-opacity="0.09" stroke-width="6.402678526355443"/><path d="M1221.6,151.0 L1241.7,142.8" stroke-opacity="0.07" stroke-width="3.0107802094649245"/><path d="M1530.1,123.0 L1549.9,111.5" stroke-opacity="0.10" stroke-width="4.713973093729136"/><path d="M1472.7,234.5 L1497.2,241.8" stroke-opacity="0.13" stroke-width="3.2282514895582177"/><path d="M1602.1,307.2 L1643.5,274.0" stroke-opacity="0.13" stroke-width="5.532649295999269"/><path d="M1050.2,43.4 L1098.2,39.5" stroke-opacity="0.08" stroke-width="3.406047748878214"/><path d="M1136.9,108.9 L1178.0,87.8" stroke-opacity="0.07" stroke-width="6.616349083259234"/><path d="M1577.5,89.5 L1623.2,82.8" stroke-opacity="0.12" stroke-width="5.67383169834741"/><path d="M1647.0,272.5 L1690.5,241.0" stroke-opacity="0.12" stroke-width="5.1231819116656485"/><path d="M1543.8,169.4 L1589.1,159.3" stroke-opacity="0.08" stroke-width="3.9367029913381897"/><path d="M1134.6,185.5 L1146.9,181.2" stroke-opacity="0.07" stroke-width="4.965488918023306"/><path d="M1378.3,199.2 L1422.8,155.1" stroke-opacity="0.13" stroke-width="4.871841630217002"/><path d="M1422.0,236.3 L1465.6,215.5" stroke-opacity="0.09" stroke-width="6.842454155562712"/><path d="M1091.2,227.9 L1126.6,193.9" stroke-opacity="0.11" stroke-width="5.730352274672427"/><path d="M1672.5,137.5 L1721.8,123.4" stroke-opacity="0.10" stroke-width="6.590247039332668"/><path d="M1063.0,251.9 L1098.0,233.5" stroke-opacity="0.13" stroke-width="4.464633325973493"/><path d="M1362.2,195.0 L1403.0,166.3" stroke-opacity="0.09" stroke-width="4.689554400788902"/><path d="M1416.2,283.9 L1437.9,287.3" stroke-opacity="0.09" stroke-width="5.014996706971131"/><path d="M1224.5,189.4 L1273.5,185.3" stroke-opacity="0.12" stroke-width="4.323585068950318"/><path d="M1255.3,128.3 L1288.8,124.5" stroke-opacity="0.12" stroke-width="3.160204392638157"/><path d="M1530.7,301.3 L1562.5,271.7" stroke-opacity="0.08" stroke-width="3.024842710685631"/><path d="M1169.0,311.8 L1203.3,309.1" stroke-opacity="0.12" stroke-width="6.639288739670808"/><path d="M1455.4,221.9 L1490.4,221.0" stroke-opacity="0.11" stroke-width="5.7239170397223"/><path d="M1184.3,236.8 L1212.6,238.7" stroke-opacity="0.07" stroke-width="3.72519263235348"/><path d="M1065.1,268.5 L1111.7,264.7" stroke-opacity="0.09" stroke-width="6.290442739090199"/><path d="M1574.1,205.8 L1594.4,194.1" stroke-opacity="0.09" stroke-width="4.273908347499134"/><path d="M1332.4,229.3 L1379.8,185.6" stroke-opacity="0.11" stroke-width="3.1575177855717014"/><path d="M1120.7,279.0 L1153.7,288.5" stroke-opacity="0.10" stroke-width="3.056521793602787"/><path d="M1302.9,214.6 L1350.4,232.4" stroke-opacity="0.10" stroke-width="4.649668382072607"/><path d="M1109.3,230.1 L1127.8,215.6" stroke-opacity="0.06" stroke-width="3.0191331210532026"/><path d="M1504.3,75.9 L1552.9,33.2" stroke-opacity="0.13" stroke-width="3.515873952875488"/><path d="M1052.1,252.2 L1071.8,252.7" stroke-opacity="0.07" stroke-width="3.200554828818848"/><path d="M1565.6,250.5 L1609.8,251.5" stroke-opacity="0.07" stroke-width="5.514492617770699"/><path d="M1521.6,175.9 L1568.9,145.4" stroke-opacity="0.14" stroke-width="5.868840427159331"/><path d="M1047.7,44.3 L1083.8,49.5" stroke-opacity="0.07" stroke-width="4.244250396266425"/><path d="M1535.3,89.0 L1579.7,74.8" stroke-opacity="0.06" stroke-width="4.470262317322492"/><path d="M1430.4,169.4 L1467.5,139.9" stroke-opacity="0.12" stroke-width="4.453062383946555"/><path d="M1477.9,225.8 L1504.6,213.5" stroke-opacity="0.12" stroke-width="6.779687770366095"/><path d="M1572.8,207.2 L1594.5,187.4" stroke-opacity="0.14" stroke-width="5.8130628109555005"/><path d="M1601.8,138.0 L1636.0,150.6" stroke-opacity="0.13" stroke-width="5.4045492360778145"/><path d="M1249.5,166.4 L1295.1,144.9" stroke-opacity="0.11" stroke-width="5.407128327233954"/><path d="M1648.5,278.2 L1669.8,256.9" stroke-opacity="0.08" stroke-width="4.6900000619077815"/><path d="M1438.3,280.7 L1483.8,237.9" stroke-opacity="0.13" stroke-width="6.247009661513939"/><path d="M1628.8,208.7 L1649.8,212.7" stroke-opacity="0.12" stroke-width="5.738555186302815"/><path d="M1660.4,142.3 L1673.8,139.3" stroke-opacity="0.12" stroke-width="3.8017221923974205"/><path d="M1549.4,314.9 L1568.7,311.9" stroke-opacity="0.11" stroke-width="4.861291697869877"/><path d="M1180.3,115.1 L1220.3,119.5" stroke-opacity="0.10" stroke-width="3.3508039276645167"/><path d="M1587.7,267.8 L1607.0,264.1" stroke-opacity="0.13" stroke-width="6.5403759727873805"/><path d="M1394.3,180.6 L1427.9,155.9" stroke-opacity="0.08" stroke-width="3.722773099120406"/><path d="M1516.0,147.0 L1548.6,132.8" stroke-opacity="0.10" stroke-width="3.5960360838861716"/><path d="M1070.3,334.2 L1095.2,312.9" stroke-opacity="0.11" stroke-width="6.149390193275792"/><path d="M1146.0,216.2 L1169.8,209.7" stroke-opacity="0.06" stroke-width="3.1343163014842204"/><path d="M1712.5,295.5 L1741.9,289.4" stroke-opacity="0.08" stroke-width="6.116763153070941"/><path d="M1329.2,319.2 L1369.9,325.2" stroke-opacity="0.14" stroke-width="4.015982146374784"/><path d="M1065.7,99.3 L1082.9,84.1" stroke-opacity="0.06" stroke-width="5.229520987559357"/><path d="M1631.2,175.2 L1679.1,188.3" stroke-opacity="0.07" stroke-width="5.39227272986895"/><path d="M1309.8,75.4 L1358.2,44.4" stroke-opacity="0.11" stroke-width="5.562531891160704"/><path d="M1689.4,237.6 L1715.1,228.0" stroke-opacity="0.07" stroke-width="6.863073952052849"/><path d="M1713.4,105.4 L1724.9,98.0" stroke-opacity="0.09" stroke-width="6.611018107915966"/><path d="M1654.2,287.0 L1666.1,288.2" stroke-opacity="0.12" stroke-width="5.586746625949438"/><path d="M1038.5,33.0 L1031.3,171.7" stroke-opacity="0.10"/><path d="M1033.9,33.0 L1057.8,194.8" stroke-opacity="0.09"/><path d="M1015.8,33.0 L1011.1,198.6" stroke-opacity="0.07"/><path d="M952.4,33.0 L966.5,175.3" stroke-opacity="0.07"/><path d="M954.3,33.0 L978.2,151.9" stroke-opacity="0.10"/><path d="M959.5,33.0 L951.3,289.2" stroke-opacity="0.07"/><path d="M1033.4,33.0 L1066.7,283.3" stroke-opacity="0.06"/><path d="M984.7,33.0 L979.6,289.3" stroke-opacity="0.11"/><path d="M1002.8,33.0 L1015.5,201.0" stroke-opacity="0.11"/><path d="M987.8,33.0 L1009.2,171.4" stroke-opacity="0.07"/><path d="M1048.2,362.0 L1057.2,453.0" stroke-opacity="0.19"/><path d="M1051.3,362.0 L1054.3,453.0" stroke-opacity="0.13"/><path d="M1065.9,362.0 L1071.3,453.0" stroke-opacity="0.18"/><path d="M1068.0,362.0 L1071.4,453.0" stroke-opacity="0.14"/><path d="M1129.5,362.0 L1139.1,453.0" stroke-opacity="0.10"/><path d="M1130.2,362.0 L1142.8,453.0" stroke-opacity="0.17"/><path d="M1135.1,362.0 L1146.3,453.0" stroke-opacity="0.18"/><path d="M1247.1,362.0 L1251.1,453.0" stroke-opacity="0.12"/><path d="M1255.9,362.0 L1275.9,453.0" stroke-opacity="0.19"/><path d="M1298.7,362.0 L1307.0,453.0" stroke-opacity="0.10"/><path d="M1304.0,362.0 L1323.6,453.0" stroke-opacity="0.10"/><path d="M1414.2,362.0 L1430.3,453.0" stroke-opacity="0.12"/><path d="M1415.7,362.0 L1415.7,453.0" stroke-opacity="0.18"/><path d="M1420.3,362.0 L1424.0,453.0" stroke-opacity="0.13"/><path d="M1424.9,362.0 L1429.3,453.0" stroke-opacity="0.15"/><path d="M1449.1,362.0 L1459.6,453.0" stroke-opacity="0.11"/><path d="M1441.1,362.0 L1453.1,453.0" stroke-opacity="0.18"/><path d="M1502.8,362.0 L1518.0,453.0" stroke-opacity="0.10"/><path d="M1495.6,362.0 L1509.0,453.0" stroke-opacity="0.16"/><path d="M1496.3,362.0 L1502.5,453.0" stroke-opacity="0.08"/><path d="M1502.3,362.0 L1512.7,453.0" stroke-opacity="0.18"/><path d="M1560.2,362.0 L1567.2,453.0" stroke-opacity="0.11"/><path d="M1561.7,362.0 L1580.6,453.0" stroke-opacity="0.09"/></g><path d="M888,200 L1720,254 L1720,288 L1516,279 L1470,287 L1412,273.5 L1041,254 L1036,266 L1014,264 L1060,310 L1060,325 L1042,328 L1070,351 L1062,356 L1045,362 L885,217 Z" fill="#f2f200"/><path d="M888,200 L1720,254 L1720,268 L885,217 Z" fill="#ffff00"/><path d="M1412,273.5 L1470,287 L1460,290 L1346,323 L1249,351.5 L1211,360 L1186,361 L1206,350 L1271,325 Z" fill="#f2f200"/><path d="M1045,355 L1290,359 L1500,362 L1502,367 L1290,366 L1045,362 Z" fill="#f2f200"/><path d="M1720,297.5 L1720,308 L1491,339 L1380,357 L1317,365 L1230,366 L1317,361 L1356,353 L1491,330.5 Z" fill="#f2f200"/><path d="M1720,333 L1720,343 L1494,359.5 L1460,366 L1427,365 L1494,354 Z" fill="#f2f200"/><g stroke="#8a8a00" stroke-width="0.8" fill="none" opacity="0.8"><path d="M885,217 L1720,268"/><path d="M908,236.6 L1720,282"/><path d="M1002,263 L1060,310 M1014,264 L1036,266"/><path d="M1440,282 L1200,355"/><path d="M1720,303 L1380,352"/><path d="M1720,338 L1494,357"/><path d="M1070,359.5 L1500,364.5"/></g><path d="M972.3,177 Q973.5,172.3 985,172.5 Q997.5,172.8 998.6,177.5 L995,206 L967,204 Z" fill="#00ee00"/><path d="M958,243 Q973,236 988,245 L955,453 L920,453 Z" fill="#00ee00"/><g stroke="#007a00" stroke-width="0.7" fill="none" opacity="0.7"><path d="M966,242 L930,453"/><path d="M976,241 L942,453"/><path d="M983,243 L949,453"/></g><circle cx="981" cy="187" r="1.3" fill="none" stroke="#006600" stroke-width="0.6"/><circle cx="652" cy="323" r="46" fill="#222"/><path d="M651.5,322.5 L628,321.3" stroke="#e04848" stroke-width="1.4"/><path d="M624.3,321 L630,318.4 L630,323.8 Z" fill="#e04848"/><path d="M651.8,322 V304" stroke="#4a4ad8" stroke-width="1.5"/><path d="M651.8,300.6 L649.6,306 H654 Z" fill="#4a4ad8"/><path d="M652.5,321 L655.5,314" stroke="#30c030" stroke-width="1.5"/><circle cx="656" cy="313.5" r="2.2" fill="#40d040"/><circle cx="651.8" cy="322.8" r="4.1" fill="#9a9a9a"/><text x="617.5" y="321" font-family="Liberation Sans" font-size="7" fill="#d03c3c">X</text><text x="652.5" y="297" font-family="Liberation Sans" font-size="7" fill="#5a5ae8">Z</text><text x="660.5" y="305" font-family="Liberation Sans" font-size="7.5" fill="#38c038">Y</text><path d="M1651.4,74.8 L1708.4,80.6 L1714,136.4 L1645.7,134.3 Z" fill="#fafafa"/><path d="M1645.7,134.3 L1714,136.4 L1695.6,146.8 L1648,146 Z" fill="#f0f0f0"/><path d="M1665,141.5 Q1680,139.5 1692,142" stroke="#b8b8b8" stroke-width="1.6" fill="none"/><text x="1662.6" y="111" font-family="Liberation Sans" font-size="19.5" fill="#333" transform="translate(1662.6,111) scale(0.66,1) rotate(3) translate(-1662.6,-111)">Сзади</text></svg>
<!--VIEW_END-->

<!-- TABLE -->
<!--TABLE_START--><div class="a" style="left:562px;top:453px;width:1157px;height:41px;background:#555;border-radius:3px 0 0 0"></div>
<svg style="left:0;top:440px" width="1720" height="60" viewBox="0 440 1720 60"><g fill="#e4e4e4"><rect x="570" y="470" width="13.3" height="2"/><rect x="570" y="474.2" width="13.3" height="2"/><rect x="570" y="478.4" width="9.2" height="2"/><path d="M581,478.3 L585.8,481.3 L581,484.4 Z"/></g><rect x="1148" y="459" width="42" height="2.6" fill="#4197b7"/><g fill="none" stroke="#e4e4e4" stroke-width="1.5"><path d="M1529.8,469.6 V467.8 Q1529.8,466.6 1528.6,466.6 H1519.8 Q1518.6,466.6 1518.6,467.8 V476.9 Q1518.6,478.1 1519.8,478.1 H1529.2 Q1530.1,478.1 1530.1,477 V472.5"/><path d="M1524.1,476 V472.8 Q1524.1,471.6 1525.3,471.6 H1533.9 Q1535.1,471.6 1535.1,472.8 V481.9 Q1535.1,483.1 1533.9,483.1 H1525.3 Q1524.1,483.1 1524.1,481.9 V480.4"/></g><g fill="#e4e4e4"><rect x="1557" y="467.8" width="14" height="2"/><rect x="1557" y="482.8" width="14" height="2"/><rect x="1563.3" y="473" width="1.7" height="6.5"/><path d="M1564.1,470.6 L1567.6,474.2 H1560.6 Z M1564.1,481.9 L1567.6,478.3 H1560.6 Z"/><rect x="1593" y="474.4" width="13.8" height="3.4"/><rect x="1599.2" y="467" width="1.7" height="4"/><path d="M1600,473.4 L1603.4,469.8 H1596.6 Z"/><rect x="1599.2" y="481" width="1.7" height="4"/><path d="M1600,478.8 L1603.4,482.4 H1596.6 Z"/></g><g fill="none" stroke="#e4e4e4" stroke-width="1.6"><path d="M1630.6,479.8 A6.3,6.3 0 0 1 1635,470.2"/><path d="M1641.4,472.6 A6.3,6.3 0 0 1 1637,482.3"/><path d="M1665.5,474.6 L1670,479.4 L1675.5,474" style="display:none"/><path d="M1703.4,474.4 L1708.2,479 L1713,474.4"/></g><g fill="#e4e4e4"><path d="M1634.6,467 L1639.5,470.3 L1634.6,473.6 Z"/><path d="M1637.4,479 L1632.5,482.3 L1637.4,485.6 Z"/></g><path fill="#e4e4e4" fill-rule="evenodd" d="M1674.90,469.85 L1674.27,467.50 L1669.73,467.50 L1669.10,469.85 L1668.13,470.41 L1665.77,469.78 L1663.50,473.72 L1665.22,475.44 L1665.22,476.56 L1663.50,478.28 L1665.77,482.22 L1668.13,481.59 L1669.10,482.15 L1669.73,484.50 L1674.27,484.50 L1674.90,482.15 L1675.87,481.59 L1678.23,482.22 L1680.50,478.28 L1678.78,476.56 L1678.78,475.44 L1680.50,473.72 L1678.23,469.78 L1675.87,470.41 Z M1672,473 A3,3 0 1 0 1672,479 A3,3 0 1 0 1672,473 Z"/></svg>
<div class="t" style="left:594.4px;top:468.90px;font-size:14.3px;color:#e6e6e6;letter-spacing:0.05px;">Коллизии (количество: 56)</div>
<div class="a" style="left:562px;top:494px;width:64px;height:31px;background:#fff;border-bottom:1px solid #ddd"></div>
<div class="a" style="left:626px;top:494px;width:1093px;height:31px;background:#676767"></div>
<div class="a" style="left:716px;top:494px;width:1px;height:31px;background:#5a5a5a"></div>
<div class="a" style="left:848px;top:494px;width:1px;height:31px;background:#5a5a5a"></div>
<div class="a" style="left:1048px;top:494px;width:1px;height:31px;background:#5a5a5a"></div>
<div class="a" style="left:1248px;top:494px;width:1px;height:31px;background:#5a5a5a"></div>
<div class="a" style="left:1348px;top:494px;width:1px;height:31px;background:#5a5a5a"></div>
<div class="a" style="left:1465px;top:494px;width:1px;height:31px;background:#5a5a5a"></div>
<div class="a" style="left:1615px;top:494px;width:1px;height:31px;background:#5a5a5a"></div>
<div class="t" style="left:643px;top:503.84px;font-size:12px;color:#ececec;font-weight:700;letter-spacing:-0.3px;">Статус</div>
<div class="t" style="left:732.6px;top:503.84px;font-size:12px;color:#ececec;font-weight:700;letter-spacing:-0.3px;">Раздел</div>
<div class="t" style="left:864.4px;top:503.84px;font-size:12px;color:#ececec;font-weight:700;letter-spacing:-0.3px;">Элемент (Модель А)</div>
<div class="t" style="left:1064.7px;top:503.84px;font-size:12px;color:#ececec;font-weight:700;letter-spacing:-0.3px;">Элемент (Модель В)</div>
<div class="t" style="left:1264.6px;top:503.84px;font-size:12px;color:#ececec;font-weight:700;letter-spacing:-0.3px;">Задача</div>
<div class="t" style="left:1364.8px;top:503.84px;font-size:12px;color:#ececec;font-weight:700;letter-spacing:-0.3px;">Расстояние</div>
<div class="t" style="left:1482.3px;top:503.84px;font-size:12px;color:#ececec;font-weight:700;letter-spacing:-0.3px;">Тип</div>
<div class="t" style="left:1632px;top:503.84px;font-size:12px;color:#ececec;font-weight:700;letter-spacing:-0.3px;">Допустимое расстояние</div>
<div class="a" style="left:582.5px;top:500.5px;width:15px;height:15px;border:2px solid #747474;border-radius:2.5px"></div>
<div class="a" style="left:562px;top:525px;width:1157px;height:33px;background:#fff"></div>
<div class="a" style="left:582.5px;top:532.2px;width:15px;height:15px;border:2px solid #747474;border-radius:2.5px"></div>
<svg style="left:642px;top:539.4px" width="11" height="6"><path d="M0,5.6 H10 L5,0 Z" fill="#7a7a7a"/></svg>
<div class="t" style="left:659.4px;top:532.95px;font-size:14px;color:#1e1e1e;letter-spacing:0.1px;">Неотсортированные</div>
<div class="a" style="left:562px;top:558px;width:1157px;height:32px;background:#b3b3b3"></div>
<div class="a" style="left:562px;top:589px;width:1157px;height:1px;background:#9c9c9c"></div>
<div class="a" style="left:625.5px;top:558px;width:1.5px;height:32px;background:#4a4a4a"></div>
<div class="a" style="left:715.5px;top:558px;width:1.2px;height:32px;background:#4a4a4a"></div>
<div class="a" style="left:847.5px;top:558px;width:1.2px;height:32px;background:#4a4a4a"></div>
<div class="a" style="left:1047.5px;top:558px;width:1.2px;height:32px;background:#4a4a4a"></div>
<div class="a" style="left:1247.5px;top:558px;width:1.2px;height:32px;background:#4a4a4a"></div>
<div class="a" style="left:1347.5px;top:558px;width:1.2px;height:32px;background:#4a4a4a"></div>
<div class="a" style="left:1464.5px;top:558px;width:1.2px;height:32px;background:#4a4a4a"></div>
<div class="a" style="left:1614.5px;top:558px;width:1.2px;height:32px;background:#4a4a4a"></div>
<div class="a" style="left:582.5px;top:564.6px;width:15px;height:15px;border:2px solid #747474;border-radius:2.5px"></div>
<div class="t" style="left:643.3px;top:566.15px;font-size:14px;color:#1e1e1e;letter-spacing:0.05px;">новая</div>
<div class="t" style="left:732.8px;top:566.15px;font-size:14px;color:#1e1e1e;letter-spacing:0.05px;">KP - KP</div>
<div class="a" style="left:849px;top:558px;width:199px;height:32px;overflow:hidden"><div class="t" style="left:16.600000000000023px;top:9.25px;font-size:14px;color:#1e1e1e;letter-spacing:-0.33px;">Свая_Винтовая_СВС_по_ТУ_25-11-23</div>
</div>
<div class="a" style="left:1049px;top:558px;width:199px;height:32px;overflow:hidden"><div class="t" style="left:16.90000000000009px;top:9.25px;font-size:14px;color:#1e1e1e;letter-spacing:-0.25px;">Фундаментная плита:ADSK_плита</div>
</div>
<div class="a" style="left:848px;top:558px;width:201px;height:32px;border:1.6px solid #1ee01e"></div>
<div class="a" style="left:1048px;top:558px;width:200px;height:32px;border:1.5px solid #f2f200;border-left-width:1.2px;left:1049px"></div>
<div class="t" style="left:1364.8px;top:566.15px;font-size:14px;color:#1e1e1e;letter-spacing:0.05px;">0.0 мм</div>
<div class="t" style="left:1482.3px;top:565.77px;font-size:13.5px;color:#555;letter-spacing:-0.35px;">неопредел...</div>
<div class="a" style="left:1482px;top:584.5px;width:117px;height:1px;background:#777"></div>
<svg style="left:1582px;top:568.8px" width="11" height="6"><path d="M0,0 H10.2 L5.1,4.8 Z" fill="#555"/></svg>
<div class="t" style="left:1632px;top:564.03px;font-size:16.5px;color:#1e1e1e;letter-spacing:0px;">0</div>
<div class="a" style="left:1632px;top:584.5px;width:87px;height:1px;background:#7a7a7a"></div>
<div class="a" style="left:562px;top:590px;width:1157px;height:31px;background:#fff"></div>
<div class="a" style="left:625.5px;top:590px;width:1.5px;height:31px;background:#4a4a4a"></div>
<div class="a" style="left:715.5px;top:590px;width:1.2px;height:31px;background:#4a4a4a"></div>
<div class="a" style="left:847.5px;top:590px;width:1.2px;height:31px;background:#4a4a4a"></div>
<div class="a" style="left:1047.5px;top:590px;width:1.2px;height:31px;background:#4a4a4a"></div>
<div class="a" style="left:1247.5px;top:590px;width:1.2px;height:31px;background:#4a4a4a"></div>
<div class="a" style="left:1347.5px;top:590px;width:1.2px;height:31px;background:#4a4a4a"></div>
<div class="a" style="left:1464.5px;top:590px;width:1.2px;height:31px;background:#4a4a4a"></div>
<div class="a" style="left:1614.5px;top:590px;width:1.2px;height:31px;background:#4a4a4a"></div>
<div class="a" style="left:582.5px;top:596.6px;width:15px;height:15px;border:2px solid #747474;border-radius:2.5px"></div>
<div class="t" style="left:643.3px;top:598.35px;font-size:14px;color:#1e1e1e;letter-spacing:0.05px;">новая</div>
<div class="t" style="left:732.8px;top:598.35px;font-size:14px;color:#1e1e1e;letter-spacing:0.05px;">KP - KP</div>
<div class="a" style="left:849px;top:590px;width:199px;height:31px;overflow:hidden"><div class="t" style="left:16.600000000000023px;top:8.35px;font-size:14px;color:#1e1e1e;letter-spacing:-0.33px;">Свая_Винтовая_СВС_по_ТУ_25-11-23</div>
</div>
<div class="a" style="left:1049px;top:590px;width:199px;height:31px;overflow:hidden"><div class="t" style="left:16.90000000000009px;top:8.35px;font-size:14px;color:#1e1e1e;letter-spacing:-0.25px;">Перекрытие:ADSK_земля:100</div>
</div>
<div class="t" style="left:1364.8px;top:598.35px;font-size:14px;color:#1e1e1e;letter-spacing:0.05px;">0.0 мм</div>
<div class="t" style="left:1482.3px;top:597.97px;font-size:13.5px;color:#555;letter-spacing:-0.35px;">неопредел...</div>
<div class="a" style="left:1482px;top:616.7px;width:117px;height:1px;background:#777"></div>
<svg style="left:1582px;top:601.0px" width="11" height="6"><path d="M0,0 H10.2 L5.1,4.8 Z" fill="#555"/></svg>
<div class="t" style="left:1632px;top:596.23px;font-size:16.5px;color:#1e1e1e;letter-spacing:0px;">0</div>
<div class="a" style="left:1632px;top:616.7px;width:87px;height:1px;background:#7a7a7a"></div>
<svg style="left:0;top:0" width="1720" height="622"><defs><filter id="sh" x="-20%" y="-20%" width="140%" height="140%"><feGaussianBlur stdDeviation="2.2"/></filter></defs><g filter="url(#sh)" opacity="0.7" transform="translate(3,3)"><path d="M1019.6,472.6 L975.2,543.6" stroke="#111" stroke-width="3.4" fill="none"/><path d="M968.0,555.0 L969.8,537.8 L982.7,545.9 Z" fill="#111"/></g><path d="M1019.6,472.6 L975.2,543.6" stroke="#cc0000" stroke-width="2.9" fill="none"/><path d="M968.0,555.0 L969.8,537.8 L982.7,545.9 Z" fill="#cc0000"/><g filter="url(#sh)" opacity="0.7" transform="translate(3,3)"><path d="M1035.8,470.7 L1069.8,546.0" stroke="#111" stroke-width="3.4" fill="none"/><path d="M1075.4,558.3 L1062.1,547.3 L1075.9,541.0 Z" fill="#111"/></g><path d="M1035.8,470.7 L1069.8,546.0" stroke="#cc0000" stroke-width="2.9" fill="none"/><path d="M1075.4,558.3 L1062.1,547.3 L1075.9,541.0 Z" fill="#cc0000"/><g filter="url(#sh)" opacity="0.7" transform="translate(3,3)"><path d="M1429.8,412.7 L1498.5,457.7" stroke="#111" stroke-width="3.4" fill="none"/><path d="M1509.8,465.1 L1492.7,463.0 L1501.0,450.2 Z" fill="#111"/></g><path d="M1429.8,412.7 L1498.5,457.7" stroke="#cc0000" stroke-width="2.9" fill="none"/><path d="M1509.8,465.1 L1492.7,463.0 L1501.0,450.2 Z" fill="#cc0000"/></svg>
<!--TABLE_END-->

</body></html>
